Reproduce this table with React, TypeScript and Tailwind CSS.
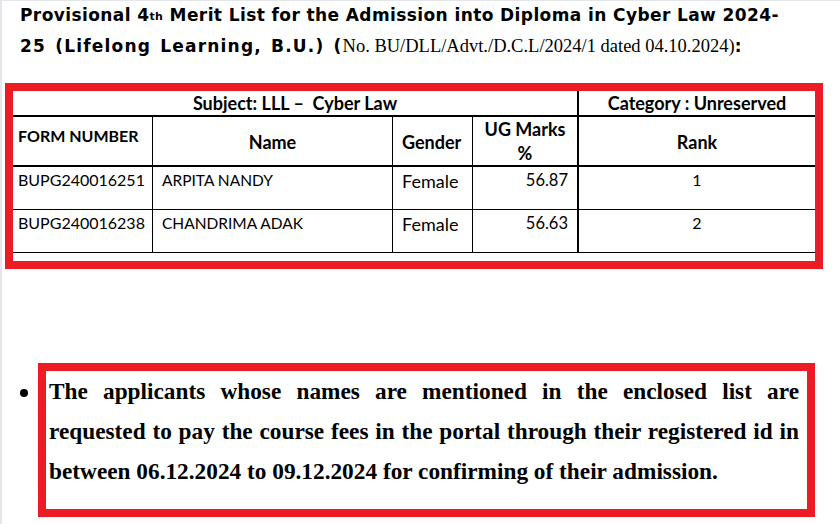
import React from 'react';

const rows = [
  { form: 'BUPG240016251', name: 'ARPITA NANDY', gender: 'Female', marks: '56.87', rank: '1' },
  { form: 'BUPG240016238', name: 'CHANDRIMA ADAK', gender: 'Female', marks: '56.63', rank: '2' },
];

export default function App() {
  return (
    <div className="w-[840px] h-[524px] overflow-hidden bg-white border-l-2 border-t border-[#e3e7ec] text-black">
      {/* Heading */}
      <div className="-mt-[1px] pl-[18px] font-['DejaVu_Sans',Verdana,sans-serif] text-[17px] leading-[31px] font-bold">
        <div className="tracking-[0.4px] whitespace-nowrap">
          Provisional 4<sup className="text-[11px] relative -top-[1px]">th</sup> Merit List for the Admission into Diploma in Cyber Law 2024-
        </div>
        <div className="whitespace-nowrap">
          <span className="tracking-[1.2px] [word-spacing:2px]">25 (Lifelong Learning, B.U.) (</span>
          <span className="font-normal font-['Liberation_Serif','Times_New_Roman',serif] text-[18.5px]">
            No. BU/DLL/Advt./D.C.L/2024/1 dated 04.10.2024)
          </span>
          :
        </div>
      </div>

      {/* Merit table */}
      <div className="mt-[21px] ml-[3px] w-[818px] h-[186px] border-8 border-[#ed1c24] font-['Lato','Open_Sans',sans-serif] text-[16px] overflow-hidden">
        <div className="flex h-[26px] border-b-2 border-black font-bold text-[18px]">
          <div className="w-[566px] border-r-2 border-black flex items-center justify-center">
            Subject: LLL –&nbsp; Cyber Law
          </div>
          <div className="flex-1 flex items-center justify-center">Category : Unreserved</div>
        </div>
        <div className="flex h-[50px] border-b-2 border-black font-bold text-[18px]">
          <div className="w-[140px] border-r border-black pl-[5px] pt-[7px] text-[16px] leading-[24px]">FORM NUMBER</div>
          <div className="w-[240px] border-r border-black flex items-center justify-center pt-[2px]">Name</div>
          <div className="w-[80px] border-r border-black flex items-center pl-[9px] pt-[2px]">Gender</div>
          <div className="w-[106px] border-r-2 border-black flex items-center justify-center text-center leading-[24px]">
            UG Marks
            <br />%
          </div>
          <div className="flex-1 flex items-center justify-center pt-[2px]">Rank</div>
        </div>
        {rows.map((r) => (
          <div key={r.form} className="flex h-[43px] border-b border-black leading-[24px]">
            <div className="w-[140px] border-r border-black pl-[5px] pt-[1px]">{r.form}</div>
            <div className="w-[240px] border-r border-black pl-[9px] pt-[1px] text-[15.5px]">{r.name}</div>
            <div className="w-[80px] border-r border-black pl-[9px] pt-[2px] text-[18px]">{r.gender}</div>
            <div className="w-[106px] border-r-2 border-black pr-[9px] pt-[1px] text-right text-[16.5px]">{r.marks}</div>
            <div className="flex-1 pt-[1px] text-center">{r.rank}</div>
          </div>
        ))}
      </div>

      {/* Notice */}
      <div className="mt-[94px] flex items-start pl-[18px]">
        <div className="mt-[26px] w-[8px] h-[8px] rounded-full bg-black" />
        <div className="ml-[10px] w-[777px] h-[154px] border-8 border-[#ed1c24] pl-[3px] pr-[8px] font-['Liberation_Serif','Times_New_Roman',serif] font-bold text-[23.3px] leading-[40px] text-justify">
          The applicants whose names are mentioned in the enclosed list are requested to pay the course fees in the portal through their registered id in between 06.12.2024 to 09.12.2024 for confirming of their admission.
        </div>
      </div>
    </div>
  );
}
